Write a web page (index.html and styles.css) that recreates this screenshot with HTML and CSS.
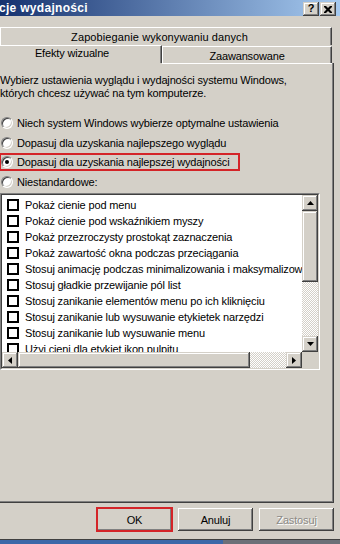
FILE: index.html
```html
<!DOCTYPE html>
<html lang="pl">
<head>
<meta charset="utf-8">
<title>Opcje wydajności</title>
<link rel="stylesheet" href="styles.css">
</head>
<body>
<div class="window">
  <div class="titlebar">
    <span class="title">cje wydajności</span>
    <div class="tbuttons">
      <span class="tbtn raised tbtn-help">?</span>
      <span class="tbtn raised">
        <svg width="8" height="7" viewBox="0 0 8 7"><path d="M0 0h2l2 2 2-2h2v1l-2.5 2.5 2.5 2.5v1h-2l-2-2-2 2h-2v-1l2.5-2.5-2.5-2.5z" fill="#000"/></svg>
      </span>
    </div>
  </div>
  <div class="client">
    <div class="tabrow tabrow1">
      <div class="tab tab-wide">Zapobieganie wykonywaniu danych</div>
    </div>
    <div class="tabrow tabrow2">
      <div class="tab tab-sel">Efekty wizualne</div>
      <div class="tab tab-adv">Zaawansowane</div>
    </div>
    <div class="panel">
      <p class="desc">Wybierz ustawienia wyglądu i wydajności systemu Windows,<br>których chcesz używać na tym komputerze.</p>
      <div class="radios">
        <div class="radio-row r1"><span class="radio"></span><span>Niech system Windows wybierze optymalne ustawienia</span></div>
        <div class="radio-row r2"><span class="radio"></span><span>Dopasuj dla uzyskania najlepszego wyglądu</span></div>
        <div class="radio-row r3"><span class="radio checked"></span><span>Dopasuj dla uzyskania najlepszej wydajności</span></div>
        <div class="radio-row r4"><span class="radio"></span><span>Niestandardowe:</span></div>
      </div>
      <div class="listbox">
        <div class="listbox-inner">
          <div class="list-main">
            <div class="items">
              <div class="item"><span class="check"></span><span>Pokaż cienie pod menu</span></div>
              <div class="item"><span class="check"></span><span>Pokaż cienie pod wskaźnikiem myszy</span></div>
              <div class="item"><span class="check"></span><span>Pokaż przezroczysty prostokąt zaznaczenia</span></div>
              <div class="item"><span class="check"></span><span>Pokaż zawartość okna podczas przeciągania</span></div>
              <div class="item"><span class="check"></span><span>Stosuj animację podczas minimalizowania i maksymalizowania okien</span></div>
              <div class="item"><span class="check"></span><span>Stosuj gładkie przewijanie pól list</span></div>
              <div class="item"><span class="check"></span><span>Stosuj zanikanie elementów menu po ich kliknięciu</span></div>
              <div class="item"><span class="check"></span><span>Stosuj zanikanie lub wysuwanie etykietek narzędzi</span></div>
              <div class="item"><span class="check"></span><span>Stosuj zanikanie lub wysuwanie menu</span></div>
              <div class="item"><span class="check"></span><span>Użyj cieni dla etykiet ikon pulpitu</span></div>
            </div>
            <div class="vscroll">
              <div class="sbtn raised"><svg width="7" height="4" viewBox="0 0 7 4"><path d="M3.5 0L7 4H0z" fill="#000"/></svg></div>
              <div class="vthumb raised"></div>
              <div class="track"></div>
              <div class="sbtn raised"><svg width="7" height="4" viewBox="0 0 7 4"><path d="M0 0h7L3.5 4z" fill="#000"/></svg></div>
            </div>
          </div>
          <div class="hrow">
            <div class="hscroll">
              <div class="sbtn raised"><svg width="4" height="7" viewBox="0 0 4 7"><path d="M0 3.5L4 0v7z" fill="#000"/></svg></div>
              <div class="hthumb raised"></div>
              <div class="track"></div>
              <div class="sbtn raised"><svg width="4" height="7" viewBox="0 0 4 7"><path d="M0 0l4 3.5L0 7z" fill="#000"/></svg></div>
            </div>
            <div class="corner"></div>
          </div>
        </div>
      </div>
    </div>
    <div class="buttons">
      <div class="btn btn-ok">OK</div>
      <div class="btn">Anuluj</div>
      <div class="btn btn-disabled">Zastosuj</div>
    </div>
  </div>
  <div class="taskbar"></div>
</div>
</body>
</html>
```

FILE: styles.css
```css
* { box-sizing: border-box; }
html, body { margin: 0; padding: 0; }
body {
  width: 340px;
  height: 544px;
  overflow: hidden;
  background: #d4d0c8;
  font-family: "Liberation Sans", Arial, sans-serif;
  font-size: 11px;
  letter-spacing: -0.15px;
  color: #000;
}
.window {
  display: flex;
  flex-direction: column;
  height: 544px;
}
.raised {
  background: #d4d0c8;
  box-shadow: inset -1px -1px #404040, inset 1px 1px #d4d0c8, inset -2px -2px #808080, inset 2px 2px #fff;
}
.titlebar {
  height: 16px;
  flex: none;
  display: flex;
  align-items: center;
  justify-content: space-between;
  padding-right: 4px;
  background: linear-gradient(to right, #16326f, #a6caf0);
}
.title {
  color: #fff;
  font-weight: bold;
  font-size: 12px;
  letter-spacing: 0.3px;
  margin-left: -1px;
  white-space: nowrap;
}
.tbuttons {
  display: flex;
  gap: 1px;
  align-self: flex-start;
  margin-top: 2px;
}
.tbtn {
  width: 16px;
  height: 14px;
  display: flex;
  align-items: center;
  justify-content: center;
  font-weight: bold;
  font-size: 11px;
  letter-spacing: 0;
  line-height: 1;
}
.tbtn-help { padding-bottom: 1px; }
.client {
  flex: 1;
  display: flex;
  flex-direction: column;
  padding-top: 11px;
}
.tabrow { display: flex; align-items: flex-end; flex: none; }
.tab {
  border-top: 1px solid #fff;
  border-left: 1px solid #fff;
  border-right: 1px solid #404040;
  box-shadow: inset -1px 0 #808080;
  text-align: center;
  white-space: nowrap;
}
.tabrow1 { height: 18px; }
.tab-wide {
  width: 332px;
  height: 18px;
  padding-right: 13px;
  line-height: 17px;
  padding-top: 1px;
  letter-spacing: 0.1px;
}
.tabrow2 { height: 18px; }
.tab-sel {
  width: 162px;
  height: 18px;
  border-left: none;
  padding-right: 17px;
  line-height: 15px;
}
.tab-adv {
  width: 170px;
  height: 17px;
  line-height: 17px;
  padding-top: 1px;
}
.panel {
  flex: none;
  width: 334px;
  height: 440px;
  border-right: 1px solid #404040;
  border-bottom: 1px solid #404040;
  box-shadow: inset -1px -1px #808080;
  background: linear-gradient(#fff, #fff) 162px 0 / 170px 1px no-repeat;
  padding-top: 11px;
}
.desc {
  margin: 0;
  line-height: 13px;
  white-space: nowrap;
}
.radios {
  margin-top: 13px;
  display: flex;
  flex-direction: column;
}
.radio-row {
  display: flex;
  align-items: center;
  gap: 4px;
  white-space: nowrap;
  padding-left: 1px;
  flex: none;
}
.r1 { height: 20px; }
.r2 { height: 19px; }
.r3 {
  height: 18px;
  width: 240px;
  border: 2px solid #d42428;
  border-left-width: 1px;
  padding-left: 0;
  margin-top: 1px;
}
.r4 { height: 20px; margin-top: 1px; }
.radio {
  width: 12px;
  height: 12px;
  border-radius: 50%;
  background: #fff;
  border: 1px solid;
  border-color: #808080 #fff #fff #808080;
  box-shadow: inset 1px 1px #404040, inset -1px -1px #d4d0c8;
  display: flex;
  align-items: center;
  justify-content: center;
  flex: none;
}
.radio.checked::after {
  content: "";
  width: 4px;
  height: 4px;
  border-radius: 50%;
  background: #000;
}
.listbox {
  margin-top: 1px;
  width: 320px;
  height: 177px;
  border: 1px solid;
  border-color: #808080 #fff #fff #808080;
}
.listbox-inner {
  height: 100%;
  border: 1px solid;
  border-color: #404040 #d4d0c8 #d4d0c8 #404040;
  display: flex;
  flex-direction: column;
}
.list-main {
  display: flex;
  height: 157px;
  flex: none;
}
.items {
  flex: 1;
  min-width: 0;
  background: #fff;
  overflow: hidden;
  padding-top: 2px;
}
.item {
  height: 16px;
  display: flex;
  align-items: center;
  gap: 6px;
  padding-left: 5px;
  white-space: nowrap;
}
.check {
  width: 12px;
  height: 12px;
  border: 2px solid #000;
  background: #fff;
  flex: none;
}
.vscroll {
  width: 16px;
  flex: none;
  display: flex;
  flex-direction: column;
}
.sbtn {
  width: 16px;
  height: 16px;
  display: flex;
  align-items: center;
  justify-content: center;
  flex: none;
}
.vthumb { height: 71px; flex: none; }
.track {
  flex: 1;
  background: repeating-conic-gradient(#d4d0c8 0 25%, #fff 0 50%) 0 0 / 2px 2px;
}
.hrow {
  display: flex;
  height: 16px;
  flex: none;
}
.hscroll {
  flex: 1;
  display: flex;
}
.hthumb { width: 232px; flex: none; }
.corner { width: 16px; background: #d4d0c8; }
.buttons {
  display: flex;
  justify-content: flex-end;
  gap: 6px;
  padding-right: 6px;
  margin-top: 5px;
  flex: none;
}
.btn {
  width: 75px;
  height: 23px;
  display: flex;
  align-items: center;
  justify-content: center;
  background: #d4d0c8;
  box-shadow: inset -1px -1px #404040, inset 1px 1px #fff, inset -2px -2px #808080, inset 2px 2px #d4d0c8;
}
.btn-ok {
  outline: 2px solid #d42428;
  outline-offset: -1px;
}
.btn-disabled {
  color: #8c8a86;
  text-shadow: 1px 1px #fff;
}
.taskbar {
  height: 5px;
  flex: none;
  margin-top: auto;
  border-top: 1px solid #404040;
  background: linear-gradient(to right, #3c68a8 0, #3c68a8 223px, #6c7078 223px);
}
```
